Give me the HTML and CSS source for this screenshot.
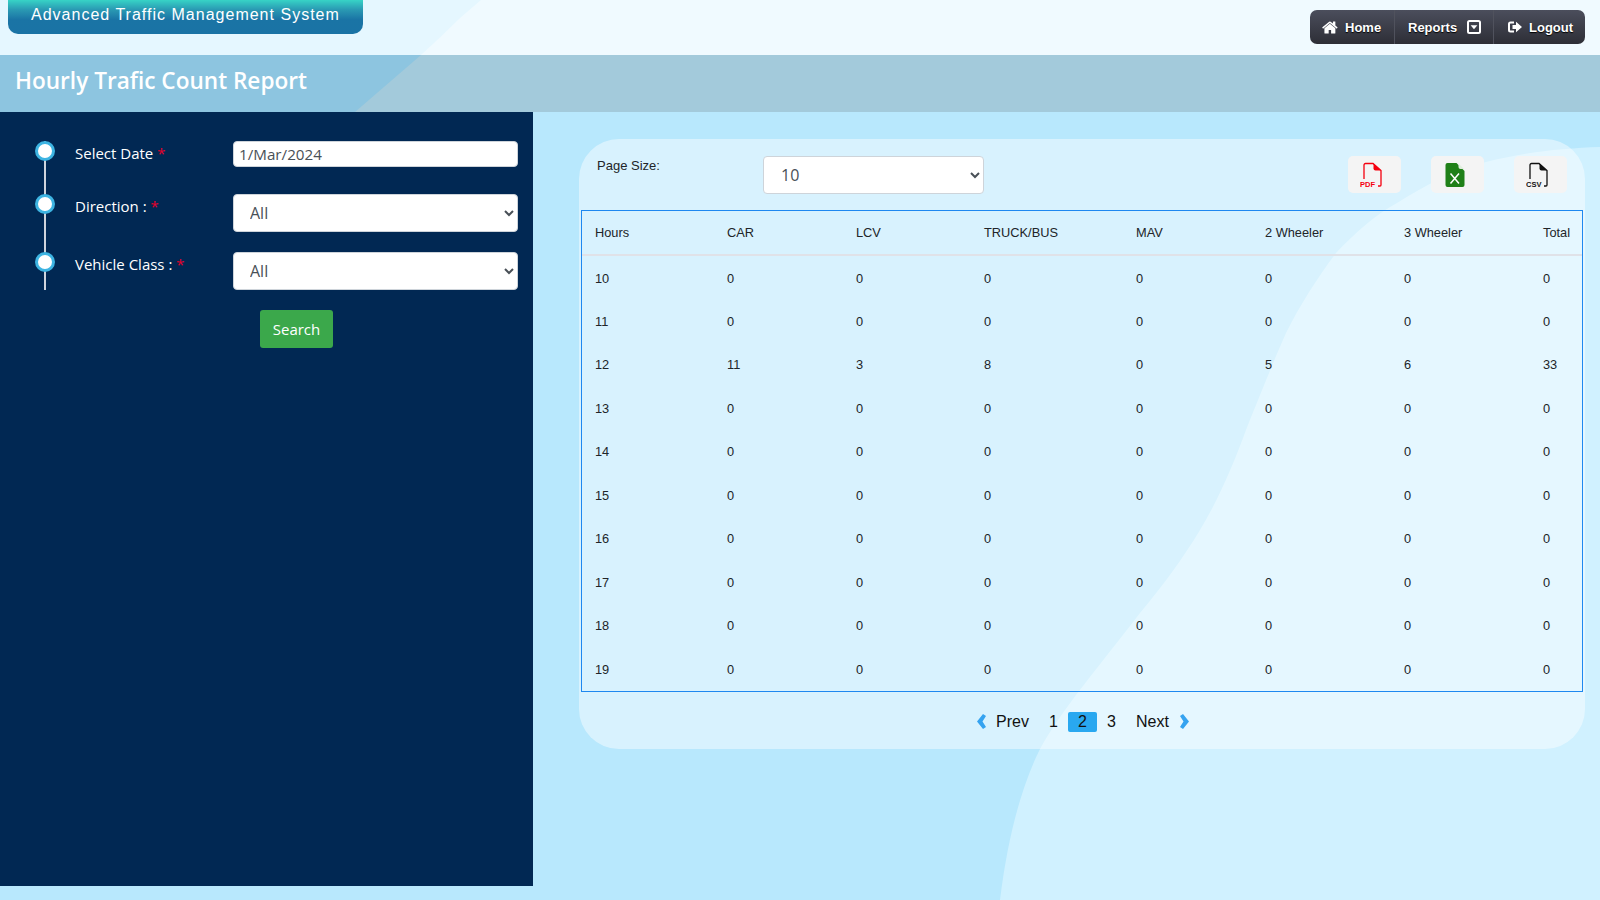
FILE: index.html
```html
<!DOCTYPE html>
<html lang="en">

<head>
    <meta charset="UTF-8">
    <meta name="viewport" content="width=device-width, initial-scale=1.0">
    <title>Hourly Trafic Count Report</title>
    <link rel="stylesheet" href="styles.css">
</head>

<body>
    <header class="topbar">
        <div class="brand">Advanced Traffic Management System</div>
        <nav class="nav">
            <a class="nav-item nav-home">
                <svg class="nav-icon home-icon" viewBox="0 0 1792 1792"><path fill="#fff" d="M1408 992v480q0 26-19 45t-45 19h-384v-384h-256v384h-384q-26 0-45-19t-19-45v-480q0-1 .5-3t.5-3l575-474 575 474q1 2 1 6zm223-69l-62 74q-8 9-21 11h-3q-13 0-21-7l-692-577-692 577q-12 8-24 7-13-2-21-11l-62-74q-8-10-7-23.5t11-21.5l719-599q32-26 76-26t76 26l244 204v-195q0-14 9-23t23-9h192q14 0 23 9t9 23v408l219 182q10 8 11 21.5t-7 23.5z"/></svg>
                Home
            </a>
            <a class="nav-item nav-reports">
                Reports
                <svg class="nav-icon" viewBox="0 0 14 14"><rect x="1" y="1" width="12" height="12" rx="1.5" fill="none" stroke="#fff" stroke-width="2"/><path fill="#fff" d="M3.6 5.2h6.8L7 9.2z"/></svg>
            </a>
            <a class="nav-item nav-logout">
                <svg class="nav-icon" viewBox="0 0 14 14"><path fill="none" stroke="#fff" stroke-width="2" d="M6 2.5H2.5a1.5 1.5 0 0 0-1.5 1.5v6a1.500 1.500 0 0 0 1.500 1.500H6"/><path fill="#fff" d="M4.500 5h3.500V1.800L14 7l-6 5.200V9H4.500z"/></svg>
                Logout
            </a>
        </nav>
    </header>

    <div class="titlebar">
        <h1>Hourly Trafic Count Report</h1>
    </div>

    <div class="layout">
        <aside class="sidebar">
            <form class="filters">
                <div class="field field-date">
                    <span class="dot"></span>
                    <label>Select Date <span class="req">*</span></label>
                    <input class="date-input" type="text" value="1/Mar/2024">
                </div>
                <div class="field field-direction">
                    <span class="dot"></span>
                    <label>Direction : <span class="req">*</span></label>
                    <select class="filter-select">
                        <option>All</option>
                    </select>
                </div>
                <div class="field field-class">
                    <span class="dot"></span>
                    <label>Vehicle Class : <span class="req">*</span></label>
                    <select class="filter-select">
                        <option>All</option>
                    </select>
                </div>
                <button class="search-btn" type="button">Search</button>
            </form>
        </aside>

        <main class="main">
            <section class="card">
                <div class="toolbar">
                    <span class="size-label">Page Size:</span>
                    <select class="size-select">
                        <option>10</option>
                    </select>
                    <div class="exports">
                        <button class="export-btn" type="button">
                            <svg viewBox="0 0 30 26" width="30" height="26"><path fill="none" stroke="#f5000f" stroke-width="1.300" d="M4 17V3a1.500 1.500 0 0 1 1.500-1.500h7.500l8 7V23a1 1 0 0 1-1 1h-2"/><path fill="#f5000f" d="M13.500 1.500l7.500 7h-5.500a2 2 0 0 1-2-2z"/><text class="file-tag" x="0" y="25" fill="#f5000f">PDF</text></svg>
                        </button>
                        <button class="export-btn" type="button">
                            <svg viewBox="0 0 30 26" width="30" height="26"><path fill="#1f8018" d="M4.500 1h9l8 8v14a2 2 0 0 1-2 2h-15a2 2 0 0 1-2-2V3a2 2 0 0 1 2-2z"/><path fill="#dfeedd" d="M15.500 1.500l5.500 5.500h-3.500a2 2 0 0 1-2-2z"/><path fill="none" stroke="#fff" stroke-width="1.500" d="M7.500 11.500l8.500 10M16 11.500l-8.500 10"/></svg>
                        </button>
                        <button class="export-btn" type="button">
                            <svg viewBox="0 0 30 26" width="30" height="26"><path fill="none" stroke="#111" stroke-width="1.300" d="M4 17V3a1.500 1.500 0 0 1 1.500-1.500h7.500l8 7V23a1 1 0 0 1-1 1h-2"/><path fill="#111" d="M13.500 1.500l7.500 7h-5.500a2 2 0 0 1-2-2z"/><text class="file-tag" x="0" y="25" fill="#111">CSV</text></svg>
                        </button>
                    </div>
                </div>

                <div class="table-wrap">
                    <table class="report">
                        <colgroup>
                            <col class="c-hours">
                            <col class="c-car">
                            <col class="c-lcv">
                            <col class="c-truck">
                            <col class="c-mav">
                            <col class="c-two">
                            <col class="c-three">
                            <col class="c-total">
                        </colgroup>
                        <thead>
                            <tr>
                                <th>Hours</th>
                                <th>CAR</th>
                                <th>LCV</th>
                                <th>TRUCK/BUS</th>
                                <th>MAV</th>
                                <th>2 Wheeler</th>
                                <th>3 Wheeler</th>
                                <th>Total</th>
                            </tr>
                        </thead>
                        <tbody>
                            <tr><td>10</td><td>0</td><td>0</td><td>0</td><td>0</td><td>0</td><td>0</td><td>0</td></tr>
                            <tr><td>11</td><td>0</td><td>0</td><td>0</td><td>0</td><td>0</td><td>0</td><td>0</td></tr>
                            <tr><td>12</td><td>11</td><td>3</td><td>8</td><td>0</td><td>5</td><td>6</td><td>33</td></tr>
                            <tr><td>13</td><td>0</td><td>0</td><td>0</td><td>0</td><td>0</td><td>0</td><td>0</td></tr>
                            <tr><td>14</td><td>0</td><td>0</td><td>0</td><td>0</td><td>0</td><td>0</td><td>0</td></tr>
                            <tr><td>15</td><td>0</td><td>0</td><td>0</td><td>0</td><td>0</td><td>0</td><td>0</td></tr>
                            <tr><td>16</td><td>0</td><td>0</td><td>0</td><td>0</td><td>0</td><td>0</td><td>0</td></tr>
                            <tr><td>17</td><td>0</td><td>0</td><td>0</td><td>0</td><td>0</td><td>0</td><td>0</td></tr>
                            <tr><td>18</td><td>0</td><td>0</td><td>0</td><td>0</td><td>0</td><td>0</td><td>0</td></tr>
                            <tr><td>19</td><td>0</td><td>0</td><td>0</td><td>0</td><td>0</td><td>0</td><td>0</td></tr>
                        </tbody>
                    </table>
                </div>

                <div class="pager">
                    <svg class="chevron" viewBox="0 0 9 15"><path fill="#35a3f0" d="M6 0l3 2-3.500 5.500L9 13l-3 2-6-7.500z"/></svg>
                    <a class="pager-prev">Prev</a>
                    <a class="pager-num">1</a>
                    <a class="pager-num active">2</a>
                    <a class="pager-num">3</a>
                    <a class="pager-next">Next</a>
                    <svg class="chevron" viewBox="0 0 9 15"><path fill="#35a3f0" d="M3 0L0 2l3.500 5.500L0 13l3 2 6-7.500z"/></svg>
                </div>
            </section>
        </main>
    </div>
</body>

</html>
```
FILE: styles.css
```css
* {
    margin: 0;
    padding: 0;
    box-sizing: border-box;
}

html,
body {
    height: 900px;
    overflow: hidden;
}

body {
    background-color: #b8e8fd;
    font-family: "Liberation Sans", Arial, sans-serif;
    color: #212529;
}

/* top bar */
.topbar {
    display: flex;
    justify-content: space-between;
    align-items: flex-start;
    height: 55px;
    padding: 0 15px 0 8px;
    background-color: #e5f7ff;
    background-image: url("data:image/svg+xml,%3Csvg xmlns='http://www.w3.org/2000/svg' width='1600' height='55'%3E%3Cpath fill='%23f0faff' d='M481 0L460 18Q440 38 421 55H1600V0z'/%3E%3C/svg%3E");
    background-repeat: no-repeat;
}

.brand {
    width: 355px;
    height: 34px;
    padding-left: 23px;
    border-radius: 0 0 10px 10px;
    background: linear-gradient(to bottom, #37d3c6 0%, #2a9ab3 28%, #1a74a5 58%, #1a73a5 100%);
    color: #fff;
    font-size: 16px;
    line-height: 29px;
    letter-spacing: 1.01px;
    white-space: nowrap;
}

.nav {
    display: flex;
    height: 34px;
    margin-top: 10px;
    border-radius: 7px;
    background: linear-gradient(to bottom, #4b4e5c, #2d2e36);
}

.nav-item {
    display: flex;
    align-items: center;
    height: 100%;
    color: #fff;
    font-size: 13px;
    font-weight: bold;
    text-shadow: 0 1px 1px #000;
}

.nav-icon {
    flex: none;
    width: 14px;
    height: 14px;
}

.home-icon {
    width: 17px;
    height: 17px;
}

.nav-home {
    gap: 6px;
    width: 85px;
    padding-left: 12px;
}

.nav-reports {
    gap: 10px;
    width: 99px;
    padding-left: 13px;
    box-shadow: -1px 0 0 #50525d;
}

.nav-logout {
    gap: 7px;
    width: 91px;
    padding-left: 14px;
    box-shadow: -1px 0 0 #50525d;
}

/* title */
.titlebar {
    display: flex;
    align-items: center;
    height: 57px;
    padding: 0 0 7px 15px;
    background-color: #8dc5e0;
    background-image: url("data:image/svg+xml,%3Csvg xmlns='http://www.w3.org/2000/svg' width='1600' height='57'%3E%3Cpath fill='%23a3cadb' d='M421 0L355 57H1600V0z'/%3E%3C/svg%3E");
    background-repeat: no-repeat;
}

.titlebar h1 {
    color: #fff;
    font-family: "Open Sans", sans-serif;
    font-size: 22.600px;
    font-weight: 600;
}

.layout {
    display: flex;
    align-items: flex-start;
    height: 788px;
}

/* left filters */
.sidebar {
    flex: none;
    width: 533px;
    height: 774px;
    background-color: #012853;
}

.filters {
    display: flex;
    flex-direction: column;
    padding: 29px 15px 0 35px;
}

.field {
    display: flex;
    align-items: flex-start;
    position: relative;
}

.field::before {
    content: "";
    position: absolute;
    left: 9px;
    top: 0;
    width: 2px;
    background-color: #cfd4dc;
}

.field-date::before {
    height: 53px;
}

.field-direction::before {
    height: 58px;
}

.field-class::before {
    height: 38px;
}

.field-date {
    height: 53px;
}

.field-direction {
    height: 58px;
}

.field-class {
    height: 58px;
}

.dot {
    flex: none;
    position: relative;
    width: 20px;
    height: 20px;
    margin-right: 20px;
    border: 3px solid #3db4e2;
    border-radius: 50%;
    background-color: #fff;
}

.field label {
    flex: none;
    width: 158px;
    color: #fff;
    font-family: "Open Sans", sans-serif;
    font-size: 15px;
    line-height: 20px;
    padding-top: 2px;
}

.req {
    color: #e6002b;
}

.date-input {
    width: 285px;
    height: 26px;
    padding: 0 5px;
    border: 1px solid #ced4da;
    border-radius: 4px;
    background-color: #fff;
    color: #495057;
    font-family: "Open Sans", sans-serif;
    font-size: 15.200px;
}

.filter-select {
    width: 285px;
    height: 38px;
    padding: 0 12px;
    border: 1px solid #ced4da;
    border-radius: 4px;
    background-color: #fff;
    color: #495057;
    font-family: "Open Sans", sans-serif;
    font-size: 16px;
}

.search-btn {
    align-self: flex-start;
    width: 73px;
    height: 38px;
    margin: 0 0 0 225px;
    border: none;
    border-radius: 3px;
    background-color: #3ba84b;
    color: #fff;
    font-family: "Open Sans", sans-serif;
    font-size: 15px;
}

/* report card */
.main {
    flex: 1;
    height: 100%;
    padding: 27px 15px 0 46px;
    background-image: url("data:image/svg+xml,%3Csvg xmlns='http://www.w3.org/2000/svg' width='1067' height='788' viewBox='533 112 1067 788'%3E%3Cpath fill='%23d0f1ff' d='M1000 900C1008 835 1022 785 1040 749C1060 712 1100 665 1140 613C1165 583 1183 558 1200 530C1220 497 1235 460 1246 430C1262 390 1272 365 1286 333C1300 305 1318 277 1336 253C1355 233 1375 215 1397 203C1425 185 1455 170 1486 162C1525 152 1565 148 1600 147V900z'/%3E%3C/svg%3E");
    background-repeat: no-repeat;
}

.card {
    height: 610px;
    padding: 17px 2px 0;
    border-radius: 40px;
    background-color: rgba(255, 255, 255, 0.45);
}

.toolbar {
    display: flex;
    align-items: flex-start;
    height: 37px;
    margin-bottom: 17px;
    padding: 0 16px;
}

.size-label {
    flex: none;
    width: 166px;
    padding-top: 2px;
    font-size: 13px;
    line-height: 16px;
}

.size-select {
    width: 221px;
    height: 38px;
    padding: 0 13px;
    border: 1px solid #ced4da;
    border-radius: 4px;
    background-color: #fff;
    color: #495057;
    font-family: "Open Sans", sans-serif;
    font-size: 16px;
}

.exports {
    display: flex;
    gap: 30px;
    margin-left: auto;
}

.export-btn {
    display: flex;
    justify-content: center;
    align-items: center;
    width: 53px;
    height: 37px;
    border: none;
    border-radius: 5px;
    background-color: #f4f4f4;
}

.file-tag {
    font-family: "Liberation Sans", Arial, sans-serif;
    font-size: 7.500px;
    font-weight: bold;
}

.table-wrap {
    height: 482px;
    border: 1px solid #1e88f0;
}

.report {
    width: 100%;
    border-collapse: collapse;
    table-layout: fixed;
    font-size: 12.800px;
}

.c-hours {
    width: 132px;
}

.c-car {
    width: 129px;
}

.c-lcv {
    width: 128px;
}

.c-truck {
    width: 152px;
}

.c-mav {
    width: 129px;
}

.c-two {
    width: 139px;
}

.c-three {
    width: 139px;
}

.report th,
.report td {
    padding: 0 0 0 13px;
    text-align: left;
    font-weight: normal;
    white-space: nowrap;
}

.report th {
    height: 44px;
    border-bottom: 2px solid #e0e2e8;
}

.report td {
    height: 43.500px;
    padding-top: 2px;
}

/* pager */
.pager {
    display: flex;
    justify-content: center;
    align-items: center;
    height: 20px;
    margin-top: 20px;
    padding-left: 2px;
    font-size: 16px;
    color: #111;
}

.chevron {
    width: 9px;
    height: 15px;
    margin-bottom: 2px;
}

.pager-prev {
    margin: 0 10px 0 10px;
}

.pager-num {
    width: 29px;
    height: 20px;
    border-radius: 2px;
    text-align: center;
    line-height: 20px;
}

.pager-num.active {
    background-color: #29a8f0;
}

.pager-next {
    margin: 0 11px 0 10px;
}
```
